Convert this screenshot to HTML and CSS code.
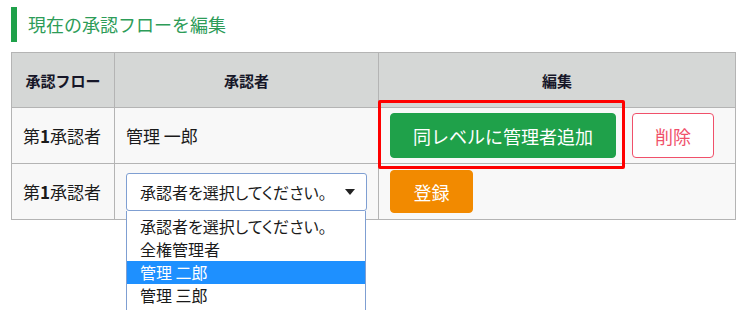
FILE: index.html
```html
<!DOCTYPE html>
<html lang="ja">
<head>
    <meta charset="UTF-8">
    <title>承認フロー編集</title>
    <link rel="stylesheet" href="styles.css">
</head>
<body>

<div class="page">
    <h2 class="heading">現在の承認フローを編集</h2>

    <table class="flow">
        <colgroup>
            <col class="col-step">
            <col class="col-user">
            <col class="col-edit">
        </colgroup>
        <thead>
            <tr>
                <th>承認フロー</th>
                <th>承認者</th>
                <th>編集</th>
            </tr>
        </thead>
        <tbody>
            <tr>
                <td>第<b>1</b>承認者</td>
                <td>管理 一郎</td>
                <td>
                    <div class="actions">
                        <span class="marked"><button class="btn btn-green">同レベルに管理者追加</button></span>
                        <button class="btn btn-delete">削除</button>
                    </div>
                </td>
            </tr>
            <tr>
                <td>第<b>1</b>承認者</td>
                <td>
                    <div class="picker">
                        <div class="picker-box">
                            <span>承認者を選択してください。</span>
                            <span class="caret"></span>
                        </div>
                        <ul class="picker-list">
                            <li>承認者を選択してください。</li>
                            <li>全権管理者</li>
                            <li class="active">管理 二郎</li>
                            <li>管理 三郎</li>
                        </ul>
                    </div>
                </td>
                <td>
                    <button class="btn btn-orange">登録</button>
                </td>
            </tr>
        </tbody>
    </table>
</div>

</body>
</html>
```

FILE: styles.css
```css
body {
    margin: 0;
    font-family: "Noto Sans CJK JP", "Noto Sans", sans-serif;
    color: #1a1a1a;
    background: #fff;
}

.page {
    padding: 7px 11px;
    min-height: 296px;
    overflow: hidden;
}

.heading {
    margin: 0;
    height: 35px;
    line-height: 35px;
    padding-left: 11px;
    border-left: 6px solid #1fa14a;
    font-size: 18px;
    font-weight: normal;
    color: #2d9c58;
}

.flow {
    margin-top: 10px;
    width: 724px;
    border-collapse: collapse;
    table-layout: fixed;
}

.col-step { width: 103px; }
.col-user { width: 264px; }
.col-edit { width: 357px; }

.flow th,
.flow td {
    border: 1px solid #b4b4b4;
    padding: 0 11px;
}

.flow th {
    height: 54px;
    background: #d5d7d6;
    font-size: 15px;
    font-weight: bold;
    color: #161628;
    text-align: center;
}

.flow td {
    height: 55px;
    background: #f8f8f8;
    font-size: 17px;
    vertical-align: middle;
}

.flow tbody tr {
    border-top: 1px solid #999;
}

.flow td:first-child {
    padding-right: 0;
    white-space: nowrap;
}

.actions {
    display: flex;
    align-items: center;
    gap: 16px;
}

.btn {
    font-family: inherit;
    font-size: 18px;
    border: 1px solid transparent;
    border-radius: 4px;
    cursor: pointer;
    display: block;
}

.btn-green {
    width: 226px;
    height: 45px;
    background: #1fa14a;
    border-color: #1fa14a;
    color: #fff;
}

.btn-delete {
    width: 82px;
    height: 45px;
    background: #fff;
    border-color: #f0506a;
    color: #f0506a;
}

.btn-orange {
    width: 83px;
    height: 43px;
    background: #f28a00;
    border-color: #f28a00;
    color: #fff;
}

/* red annotation frame around the add button */
.marked {
    position: relative;
    display: block;
}

.marked::after {
    content: "";
    position: absolute;
    top: -13px;
    left: -12px;
    right: -9px;
    bottom: -11px;
    border: 3px solid #ff0000;
    border-radius: 2px;
}

.picker {
    position: relative;
    width: 241px;
    font-size: 16px;
    font-feature-settings: "palt";
}

.picker-box {
    height: 36px;
    border: 1px solid #7f9fd2;
    border-radius: 3px;
    background: #fff;
    display: flex;
    align-items: center;
    justify-content: space-between;
    padding: 0 11px 0 13px;
}

.caret {
    width: 0;
    height: 0;
    border-left: 5px solid transparent;
    border-right: 5px solid transparent;
    border-top: 6px solid #222;
}

.picker-list {
    position: absolute;
    top: 38px;
    left: 0;
    width: 238px;
    height: 100px;
    margin: 0;
    padding: 4px 0 0;
    list-style: none;
    background: #fff;
    border: 1px solid #7f9fd2;
    border-top: none;
    border-bottom: none;
    z-index: 10;
}

.picker-list li {
    height: 23px;
    line-height: 23px;
    padding-left: 13px;
    white-space: nowrap;
}

.picker-list li.active {
    background: #1e90ff;
    color: #fff;
}
```
